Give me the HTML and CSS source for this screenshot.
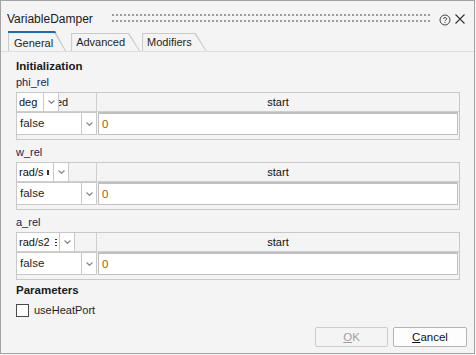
FILE: index.html
```html
<!DOCTYPE html>
<html lang="en">

<head>
    <meta charset="UTF-8" />
    <title>VariableDamper</title>
    <link rel="stylesheet" href="styles.css">
</head>

<body>
    <div class="window">
        <div class="titlebar">
            <span class="title">VariableDamper</span>
            <svg class="grip" width="320" height="8">
                <defs>
                    <pattern id="dots" width="4" height="6" patternUnits="userSpaceOnUse">
                        <rect width="2" height="2" fill="#9c9c9c" />
                    </pattern>
                </defs>
                <rect width="320" height="8" fill="url(#dots)" />
            </svg>
            <svg class="help" width="12" height="12" viewBox="0 0 12 12">
                <circle cx="6" cy="6" r="5" fill="none" stroke="#444" stroke-width="1" />
                <path d="M4.3 4.8 C4.3 3.2 7.7 3.2 7.7 4.8 C7.7 6 6 6 6 7.3" fill="none" stroke="#444" stroke-width="1" />
                <rect x="5.5" y="8.2" width="1" height="1" fill="#444" />
            </svg>
            <svg class="close" width="10" height="10" viewBox="0 0 10 10">
                <path d="M0.5 0.5 L9.5 9.5 M9.5 0.5 L0.5 9.5" stroke="#333" stroke-width="1.1" />
            </svg>
        </div>

        <div class="tabs">
            <div class="tab active"><span>General</span></div>
            <div class="tab"><span>Advanced</span></div>
            <div class="tab"><span>Modifiers</span></div>
        </div>

        <div class="panel">
            <div class="heading">Initialization</div>

            <div class="var">phi_rel</div>
            <div class="table">
                <div class="thead">
                    <div class="th fixed">fixed
                        <div class="unit">
                            <span class="unit-text unit-deg">deg</span>
                            <span class="drop"><svg width="7" height="4"><path d="M0.5 0.5 L3.5 3.3 L6.5 0.5" fill="none" stroke="#8a8a8a" stroke-width="1.2" /></svg></span>
                        </div>
                    </div>
                    <div class="th">start</div>
                </div>
                <div class="trow">
                    <div class="combo">
                        <span class="combo-text">false</span>
                        <span class="drop"><svg width="7" height="4"><path d="M0.5 0.5 L3.5 3.3 L6.5 0.5" fill="none" stroke="#8a8a8a" stroke-width="1.2" /></svg></span>
                    </div>
                    <div class="input">0</div>
                </div>
            </div>

            <div class="var">w_rel</div>
            <div class="table">
                <div class="thead">
                    <div class="th fixed">
                        <div class="unit">
                            <span class="unit-text unit-rads">rad/s<i class="clip"></i></span>
                            <span class="drop"><svg width="7" height="4"><path d="M0.5 0.5 L3.5 3.3 L6.5 0.5" fill="none" stroke="#8a8a8a" stroke-width="1.2" /></svg></span>
                        </div>
                    </div>
                    <div class="th">start</div>
                </div>
                <div class="trow">
                    <div class="combo">
                        <span class="combo-text">false</span>
                        <span class="drop"><svg width="7" height="4"><path d="M0.5 0.5 L3.5 3.3 L6.5 0.5" fill="none" stroke="#8a8a8a" stroke-width="1.2" /></svg></span>
                    </div>
                    <div class="input">0</div>
                </div>
            </div>

            <div class="var">a_rel</div>
            <div class="table">
                <div class="thead">
                    <div class="th fixed">
                        <div class="unit">
                            <span class="unit-text unit-rads2">rad/s2<i class="clip dots"></i></span>
                            <span class="drop"><svg width="7" height="4"><path d="M0.5 0.5 L3.5 3.3 L6.5 0.5" fill="none" stroke="#8a8a8a" stroke-width="1.2" /></svg></span>
                        </div>
                    </div>
                    <div class="th">start</div>
                </div>
                <div class="trow">
                    <div class="combo">
                        <span class="combo-text">false</span>
                        <span class="drop"><svg width="7" height="4"><path d="M0.5 0.5 L3.5 3.3 L6.5 0.5" fill="none" stroke="#8a8a8a" stroke-width="1.2" /></svg></span>
                    </div>
                    <div class="input">0</div>
                </div>
            </div>

            <div class="heading params">Parameters</div>
            <label class="check"><span class="box"></span>useHeatPort</label>
        </div>

        <div class="buttons">
            <button class="btn" disabled><u>O</u>K</button>
            <button class="btn"><u>C</u>ancel</button>
        </div>
    </div>
</body>

</html>
```

FILE: styles.css
```css
html,
body {
    margin: 0;
    background: #f4f4f4;
    font-family: 'Liberation Sans', Arial, sans-serif;
    font-size: 11px;
    color: #1e1e1e;
}

.window {
    width: 475px;
    height: 354px;
    box-sizing: border-box;
    border: 1px solid #a3a3a3;
    background: #f4f4f4;
    display: flex;
    flex-direction: column;
}

/* title bar */

.titlebar {
    height: 30px;
    box-sizing: border-box;
    padding: 10px 0 0 6px;
    display: flex;
    align-items: flex-start;
}

.title {
    font-size: 12px;
    line-height: 16px;
    color: #1a1a1a;
    width: 105px;
}

.grip {
    margin-top: 3px;
    display: block;
}

.help {
    display: block;
    margin: 3px 0 0 7px;
}

.close {
    display: block;
    margin: 3px 0 0 4px;
}

/* tabs */

.tabs {
    height: 21px;
    box-sizing: border-box;
    border-bottom: 1px solid #dcdcdc;
    display: flex;
    align-items: flex-end;
    padding-left: 7px;
}

.tab {
    height: 18px;
    background: #c9c9c9;
    clip-path: polygon(0 0, calc(100% - 11px) 0, 100% 100%, 0 100%);
    margin-right: 2px;
}

.tab span {
    display: block;
    height: 17px;
    margin: 1px 0 0 1px;
    padding: 0 15px 0 4px;
    background: #f4f4f4;
    clip-path: polygon(0 0, calc(100% - 12px) 0, calc(100% - 1px) 100%, 0 100%);
    line-height: 17px;
    font-size: 11px;
}

.tab.active {
    height: 20px;
    background: linear-gradient(#1a6db3 0 2px, #c9c9c9 2px);
    margin-right: 5px;
}

.tab.active span {
    height: 18px;
    margin-top: 2px;
    padding: 0 13px 0 5px;
    line-height: 20px;
}

/* panel */

.panel {
    flex: 1;
    padding: 6px 14px 0 15px;
}

.heading {
    font-weight: bold;
    font-size: 11.5px;
    line-height: 16px;
    color: #1a1a1a;
}

.heading.params {
    margin-top: 2px;
}

.var {
    line-height: 16px;
    color: #1d2150;
    margin-bottom: 2px;
}

.table + .var {
    margin-top: 4px;
}

.table {
    border: 1px solid #c8c8c8;
    background: #f4f4f4;
    padding-bottom: 4px;
}

.thead {
    display: grid;
    grid-template-columns: 80px 1fr;
    height: 18px;
    border-bottom: 1px solid #cfcfcf;
}

.th {
    text-align: center;
    line-height: 18px;
    color: #111;
}

.th.fixed {
    position: relative;
    border-right: 1px solid #cfcfcf;
    overflow: hidden;
}

.unit {
    position: absolute;
    left: -1px;
    top: -1px;
    height: 20px;
    display: flex;
    text-align: left;
}

.unit-text {
    box-sizing: border-box;
    border: 1px solid #c8c8c8;
    background: #fff;
    padding-left: 2px;
    line-height: 18px;
    white-space: nowrap;
    overflow: hidden;
    color: #111;
    display: flex;
    align-items: center;
}

.clip {
    display: block;
    width: 2px;
    height: 5px;
    margin-left: 4px;
    background: #333;
}

.clip.dots {
    height: 7px;
    margin-left: 5px;
    background: repeating-linear-gradient(#333 0 1px, transparent 1px 3px);
}

.unit-deg {
    width: 28px;
}

.unit-rads {
    width: 38px;
}

.unit-rads2 {
    width: 44px;
}

.drop {
    width: 15px;
    box-sizing: border-box;
    border: 1px solid #c8c8c8;
    border-left: none;
    background: #fff;
    display: flex;
    align-items: center;
    justify-content: center;
}

.drop svg {
    display: block;
}

.trow {
    display: grid;
    grid-template-columns: 81px 1fr;
    height: 23px;
    padding-right: 1px;
}

.combo {
    display: flex;
    border: 1px solid #c8c8c8;
    border-left: none;
    border-right: 1px solid #c8c8c8;
    margin-right: 1px;
}

.combo-text {
    flex: 1;
    background: #fff;
    padding-left: 3px;
    line-height: 21px;
    font-size: 11.5px;
}

.combo .drop {
    border: none;
    border-left: 1px solid #c8c8c8;
    width: 15px;
}

.input {
    background: #fff;
    border: 1px solid #c0c0c0;
    border-top-width: 2px;
    padding-left: 3px;
    line-height: 20px;
    font-size: 11.5px;
    color: #a85a05;
}

/* checkbox */

.check {
    display: flex;
    align-items: center;
    margin-top: 4px;
    line-height: 16px;
    font-size: 11px;
}

.box {
    width: 11px;
    height: 11px;
    border: 1px solid #4a4a4a;
    background: #fff;
    margin-right: 5px;
}

/* footer buttons */

.buttons {
    display: flex;
    justify-content: flex-end;
    gap: 5px;
    padding: 0 7px 6px 0;
}

.btn {
    width: 74px;
    height: 20px;
    font-family: 'Liberation Sans', Arial, sans-serif;
    font-size: 11.5px;
    background: #fdfdfd;
    border: 1px solid #b4b4b4;
    border-radius: 2px;
    color: #111;
    padding: 0;
}

.btn:disabled {
    width: 73px;
    background: #f4f4f4;
    border-color: #cdcdcd;
    color: #a0a0a0;
}
```
